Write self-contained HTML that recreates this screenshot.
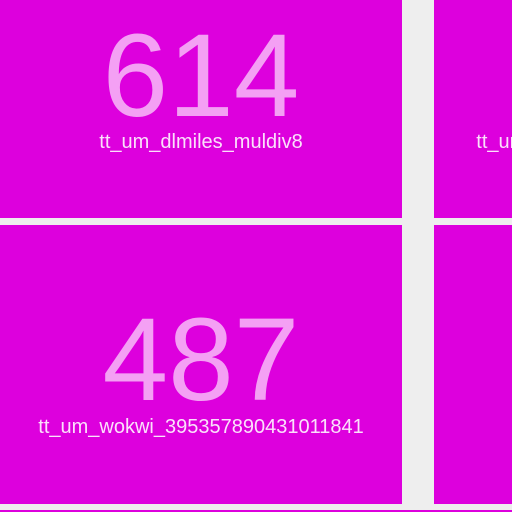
<!DOCTYPE html>
<html><head><style>
body{margin:0;width:512px;height:512px;background:#eeeeee;position:relative;overflow:hidden;font-family:"Liberation Sans",sans-serif}
.t{position:absolute;background:#dd00dd;color:#f4a0f4;text-align:center;overflow:hidden}
.n{position:absolute;left:0;right:0;font-size:118px;line-height:1;font-weight:normal}
.l{position:absolute;left:0;width:402px;font-size:20px;line-height:1;color:#fbe0fb}
</style></head><body>
<div class="t" style="left:0;top:0;width:402px;height:218px">
 <div class="n" style="top:17px">614</div>
 <div class="l" style="top:132px">tt_um_dlmiles_muldiv8</div>
</div>
<div class="t" style="left:434px;top:0;width:78px;height:218px">
 <div class="l" style="top:132px;left:-57px">tt_um_dlmiles_muldiv8</div>
</div>
<div class="t" style="left:0;top:225px;width:402px;height:279px">
 <div class="n" style="top:76px">487</div>
 <div class="l" style="top:192px">tt_um_wokwi_395357890431011841</div>
</div>
<div class="t" style="left:434px;top:225px;width:78px;height:279px"></div>
<div class="t" style="left:0;top:510px;width:512px;height:2px"></div>
</body></html>
